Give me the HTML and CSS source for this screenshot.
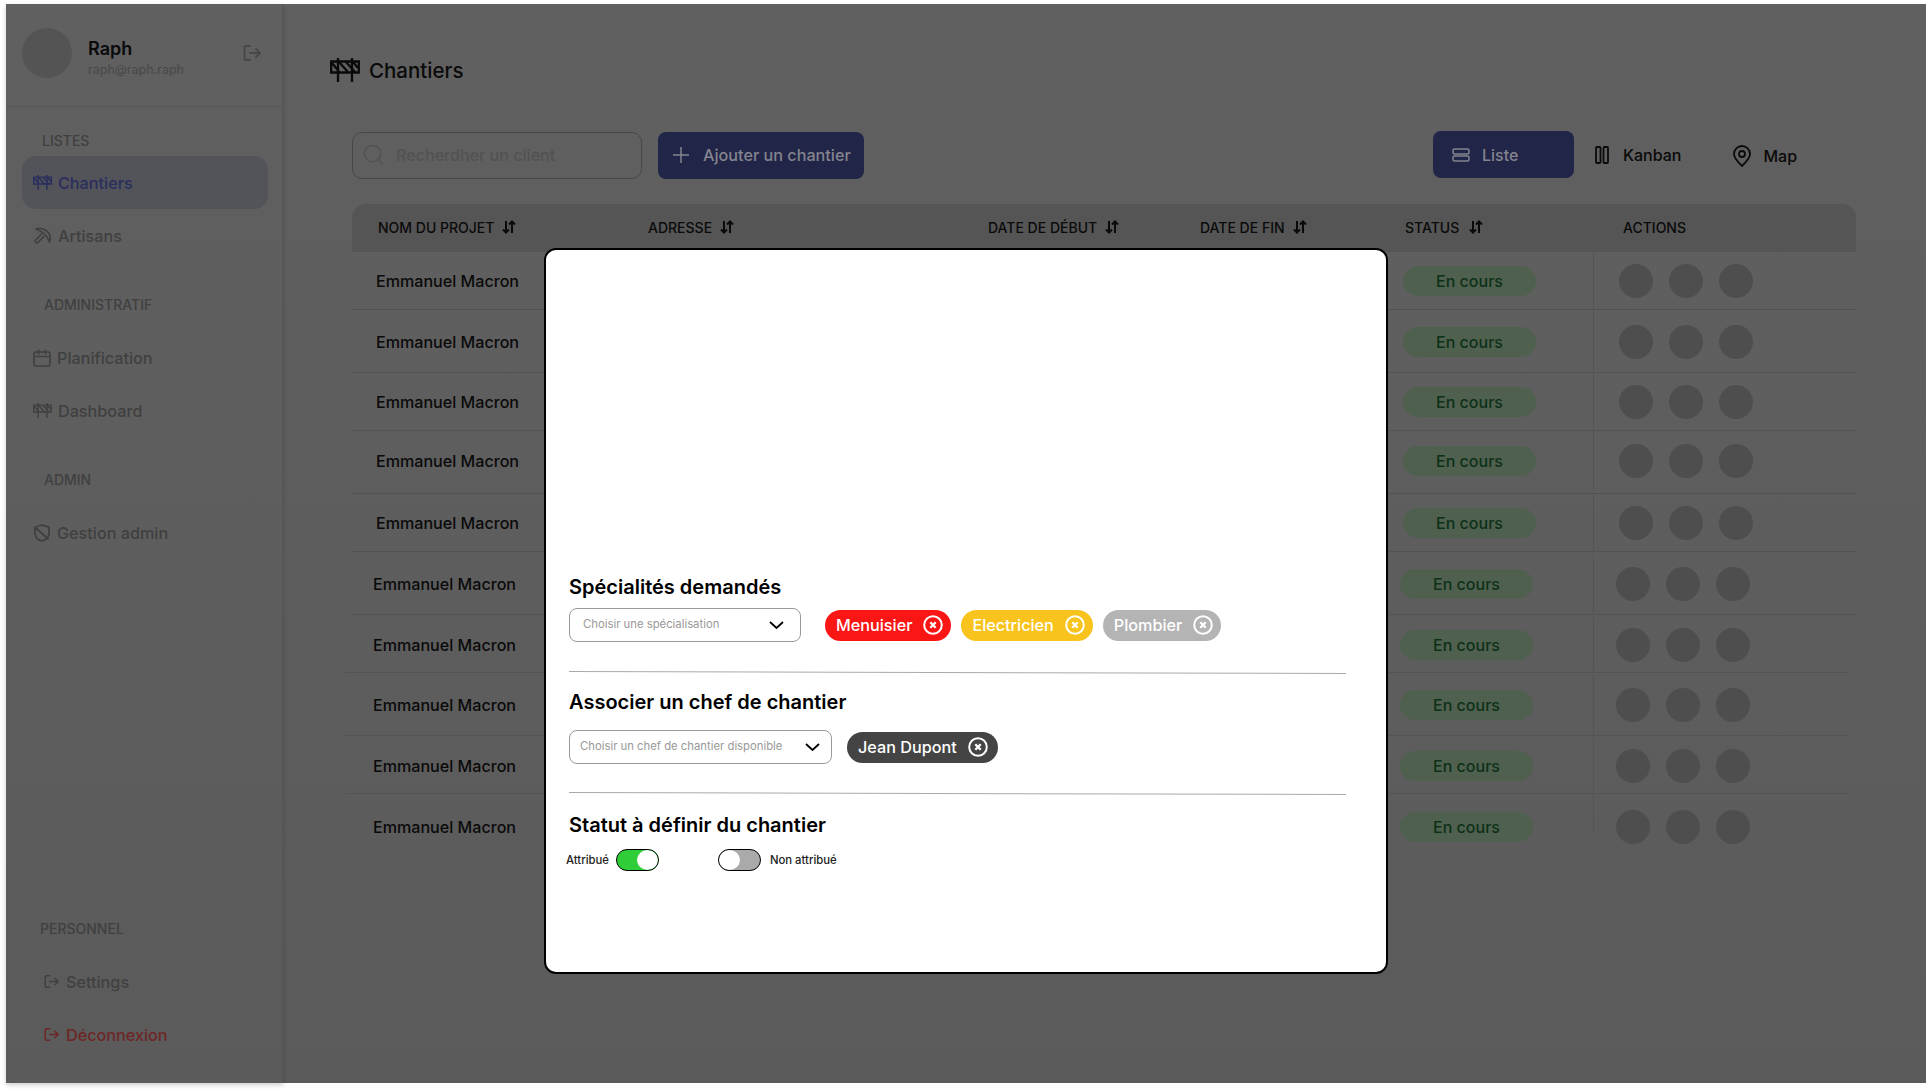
FILE: index.html
```html
<!DOCTYPE html>
<html lang="fr">
<head>
    <meta charset="UTF-8">
    <title>Chantiers</title>
    <link rel="stylesheet" href="styles.css">
</head>
<body>

<svg class="sprite" width="0" height="0">
    <symbol id="i-barrier" viewBox="0 0 30 26">
        <path d="M8 1v24M22 1v24M1.200 4.500h27.600v11H1.200z" fill="none" stroke="currentColor" stroke-width="2.300"/>
        <path d="M2 6l7 8.500M9 5l9 10M16 5l9 10M23 5l5 6" fill="none" stroke="currentColor" stroke-width="2.300"/>
    </symbol>
    <symbol id="i-logout" viewBox="0 0 18 18">
        <path d="M7 2H3a1.500 1.500 0 0 0-1.500 1.500v11A1.500 1.500 0 0 0 3 16h4M7 9h10M13 5l4 4-4 4" fill="none" stroke="currentColor" stroke-width="1.800" stroke-linecap="round" stroke-linejoin="round"/>
    </symbol>
    <symbol id="i-pick" viewBox="0 0 20 20">
        <path d="M3 3C8 1.500 14 3 17 8c1.500 3 1.500 6 .5 9-1.500-4-3.500-7-6.500-9.500C8.500 5.500 5.500 4 3 3z" fill="none" stroke="currentColor" stroke-width="1.700" stroke-linejoin="round"/>
        <path d="M9.500 8l-7 7a1.800 1.800 0 0 0 2.500 2.500l7-7" fill="none" stroke="currentColor" stroke-width="1.700" stroke-linejoin="round"/>
    </symbol>
    <symbol id="i-calendar" viewBox="0 0 18 18">
        <path d="M3 3h12a2 2 0 0 1 2 2v10a2 2 0 0 1-2 2H3a2 2 0 0 1-2-2V5a2 2 0 0 1 2-2zM1 7.500h16M5.500 1v4M12.500 1v4" fill="none" stroke="currentColor" stroke-width="1.700" stroke-linecap="round"/>
    </symbol>
    <symbol id="i-shield" viewBox="0 0 18 18">
        <path d="M4 2.500L9 1l7 2.200V9c0 4-3 7-7 8-4-1-7-4-7-8V3.500M2 3l13 12" fill="none" stroke="currentColor" stroke-width="1.800" stroke-linecap="round" stroke-linejoin="round"/>
    </symbol>
    <symbol id="i-sort" viewBox="0 0 14 14">
        <path d="M4 1v11.500M1 9.500l3 3 3-3M10 13V1.500M7 4.500l3-3 3 3" fill="none" stroke="currentColor" stroke-width="2"/>
    </symbol>
    <symbol id="i-close" viewBox="0 0 20 20">
        <circle cx="10" cy="10" r="8.800" fill="none" stroke="currentColor" stroke-width="2"/>
        <path d="M7.300 7.300l5.400 5.400M12.700 7.300l-5.400 5.400" fill="none" stroke="currentColor" stroke-width="2.300"/>
    </symbol>
    <symbol id="i-chevron" viewBox="0 0 15 8">
        <path d="M1 1l6.500 6L14 1" fill="none" stroke="currentColor" stroke-width="1.800"/>
    </symbol>
</svg>

<div class="app">

    <!-- Sidebar -->
    <aside class="sidebar">
        <div class="profile">
            <div class="avatar"></div>
            <div class="profile-text">
                <div class="profile-name">Raph</div>
                <div class="profile-mail">raph@raph.raph</div>
            </div>
            <svg class="profile-logout"><use href="#i-logout"/></svg>
        </div>

        <nav class="nav">
            <div class="nav-label nav-label-first">LISTES</div>
            <a class="nav-item active"><svg class="nav-icon wide"><use href="#i-barrier"/></svg>Chantiers</a>
            <a class="nav-item"><svg class="nav-icon wide"><use href="#i-pick"/></svg>Artisans</a>

            <div class="nav-label">ADMINISTRATIF</div>
            <a class="nav-item"><svg class="nav-icon"><use href="#i-calendar"/></svg>Planification</a>
            <a class="nav-item"><svg class="nav-icon wide"><use href="#i-barrier"/></svg>Dashboard</a>

            <div class="nav-label">ADMIN</div>
            <a class="nav-item"><svg class="nav-icon"><use href="#i-shield"/></svg>Gestion admin</a>

            <div class="nav-label nav-label-bottom">PERSONNEL</div>
            <a class="nav-item nav-item-small"><svg class="nav-icon small"><use href="#i-logout"/></svg>Settings</a>
            <a class="nav-item nav-item-small danger"><svg class="nav-icon small"><use href="#i-logout"/></svg>Déconnexion</a>
        </nav>
    </aside>

    <!-- Page -->
    <main class="page">
        <h1 class="page-title"><svg class="title-icon"><use href="#i-barrier"/></svg>Chantiers</h1>

        <div class="toolbar">
            <div class="search">
                <svg class="search-icon" viewBox="0 0 22 22"><circle cx="10" cy="10" r="8.500" fill="none" stroke="currentColor" stroke-width="1.500"/><path d="M16 16l5 5" stroke="currentColor" stroke-width="1.500"/></svg>
                Recherdher un client
            </div>
            <div class="btn-add">
                <svg class="plus-icon" viewBox="0 0 16 16"><path d="M8 0v16M0 8h16" stroke="currentColor" stroke-width="1.500"/></svg>
                Ajouter un chantier
            </div>
            <div class="views">
                <div class="view view-active">
                    <svg class="view-icon" viewBox="0 0 18 14"><rect x="1" y="1" width="16" height="5" rx="1.500" fill="none" stroke="currentColor" stroke-width="1.500"/><rect x="1" y="8" width="16" height="5" rx="1.500" fill="none" stroke="currentColor" stroke-width="1.500"/></svg>
                    Liste
                </div>
                <div class="view view-kanban">
                    <svg class="kanban-icon" viewBox="0 0 14 18"><rect x="1" y="1" width="4.500" height="16" rx="1" fill="none" stroke="currentColor" stroke-width="1.800"/><rect x="8.500" y="1" width="4.500" height="16" rx="1" fill="none" stroke="currentColor" stroke-width="1.800"/></svg>
                    Kanban
                </div>
                <div class="view view-map">
                    <svg class="map-icon" viewBox="0 0 18 22"><path d="M9 21C5 17 1 13.500 1 9a8 8 0 0 1 16 0c0 4.500-4 8-8 12z" fill="none" stroke="currentColor" stroke-width="1.800" stroke-linejoin="round"/><circle cx="9" cy="9" r="3" fill="none" stroke="currentColor" stroke-width="1.800"/></svg>
                    Map
                </div>
            </div>
        </div>

        <div class="table">
            <div class="table-head">
                <div class="th th-name">NOM DU PROJET <svg class="sort"><use href="#i-sort"/></svg></div>
                <div class="th th-address">ADRESSE <svg class="sort"><use href="#i-sort"/></svg></div>
                <div class="th th-start">DATE DE DÉBUT <svg class="sort"><use href="#i-sort"/></svg></div>
                <div class="th th-end">DATE DE FIN <svg class="sort"><use href="#i-sort"/></svg></div>
                <div class="th th-status">STATUS <svg class="sort"><use href="#i-sort"/></svg></div>
                <div class="th">ACTIONS</div>
            </div>
            <div class="row"><div class="cell-name">Emmanuel Macron</div><div class="cell-status"><span class="pill">En cours</span></div><div class="cell-actions"><i></i><i></i><i></i></div></div>
            <div class="row"><div class="cell-name">Emmanuel Macron</div><div class="cell-status"><span class="pill">En cours</span></div><div class="cell-actions"><i></i><i></i><i></i></div></div>
            <div class="row"><div class="cell-name">Emmanuel Macron</div><div class="cell-status"><span class="pill">En cours</span></div><div class="cell-actions"><i></i><i></i><i></i></div></div>
            <div class="row row-raised"><div class="cell-name">Emmanuel Macron</div><div class="cell-status"><span class="pill">En cours</span></div><div class="cell-actions"><i></i><i></i><i></i></div></div>
            <div class="row"><div class="cell-name">Emmanuel Macron</div><div class="cell-status"><span class="pill">En cours</span></div><div class="cell-actions"><i></i><i></i><i></i></div></div>
            <div class="row row-nudged"><div class="cell-name">Emmanuel Macron</div><div class="cell-status"><span class="pill">En cours</span></div><div class="cell-actions"><i></i><i></i><i></i></div></div>
            <div class="row row-nudged row-wide"><div class="cell-name">Emmanuel Macron</div><div class="cell-status"><span class="pill">En cours</span></div><div class="cell-actions"><i></i><i></i><i></i></div></div>
            <div class="row row-nudged row-wide"><div class="cell-name">Emmanuel Macron</div><div class="cell-status"><span class="pill">En cours</span></div><div class="cell-actions"><i></i><i></i><i></i></div></div>
            <div class="row row-nudged row-wide"><div class="cell-name">Emmanuel Macron</div><div class="cell-status"><span class="pill">En cours</span></div><div class="cell-actions"><i></i><i></i><i></i></div></div>
            <div class="row row-nudged row-wide row-last"><div class="cell-name">Emmanuel Macron</div><div class="cell-status"><span class="pill">En cours</span></div><div class="cell-actions"><i></i><i></i><i></i></div></div>
        </div>
    </main>

    <!-- Modal -->
    <div class="modal">
        <h2 class="modal-title">Spécialités demandés</h2>
        <div class="pick-row">
            <div class="select select-spec"><span>Choisir une spécialisation</span><svg class="chevron"><use href="#i-chevron"/></svg></div>
            <span class="tag tag-red">Menuisier<svg class="tag-close"><use href="#i-close"/></svg></span>
            <span class="tag tag-yellow">Electricien<svg class="tag-close"><use href="#i-close"/></svg></span>
            <span class="tag tag-grey">Plombier<svg class="tag-close"><use href="#i-close"/></svg></span>
        </div>
        <hr class="modal-line">

        <h2 class="modal-title">Associer un chef de chantier</h2>
        <div class="pick-row pick-row-chef">
            <div class="select select-chef"><span>Choisir un chef de chantier disponible</span><svg class="chevron"><use href="#i-chevron"/></svg></div>
            <span class="tag tag-dark">Jean Dupont<svg class="tag-close"><use href="#i-close"/></svg></span>
        </div>
        <hr class="modal-line">

        <h2 class="modal-title modal-title-last">Statut à définir du chantier</h2>
        <div class="toggles">
            <span class="toggle-text">Attribué</span>
            <span class="toggle toggle-on"></span>
            <span class="toggle toggle-off"></span>
            <span class="toggle-text">Non attribué</span>
        </div>
    </div>

</div>

</body>
</html>
```

FILE: styles.css
```css
* {
    margin: 0;
    padding: 0;
    box-sizing: border-box;
}

body {
    font-family: Inter, "Liberation Sans", sans-serif;
    background: #fff;
    height: 1092px;
    overflow: hidden;
}

.sprite {
    position: absolute;
}

.app {
    position: relative;
    display: flex;
    height: 1079px;
    margin: 4px 0 0 6px;
    background: linear-gradient(#606060, #5b5b5b);
    color: #0a0a0a;
}

/* Sidebar */

.sidebar {
    width: 277px;
    flex-shrink: 0;
    display: flex;
    flex-direction: column;
    border-right: 1px solid #575757;
    box-shadow: 0 2px 5px rgba(0, 0, 0, 0.2);
}

.profile {
    height: 103px;
    flex-shrink: 0;
    display: flex;
    align-items: center;
    padding: 0 21px 4px 16px;
    border-bottom: 1px solid #565656;
}

.avatar {
    width: 50px;
    height: 50px;
    border-radius: 50%;
    background: #545454;
}

.profile-text {
    margin-left: 16px;
    padding-top: 9px;
    flex: 1;
}

.profile-name {
    font-size: 18px;
    font-weight: 600;
    line-height: 22px;
}

.profile-mail {
    font-size: 12.500px;
    line-height: 16px;
    margin-top: 2px;
    color: #484848;
}

.profile-logout {
    width: 18px;
    height: 18px;
    color: #474747;
}

.nav {
    flex: 1;
    display: flex;
    flex-direction: column;
    padding: 0 14px 22px 16px;
}

.nav-label {
    font-size: 14px;
    font-weight: 500;
    line-height: 17px;
    color: #404040;
    padding-left: 22px;
    margin: 34px 0 18px;
}

.nav-label-first {
    padding-left: 20px;
    margin: 25px 0 7px;
}

.nav-label-bottom {
    padding-left: 18px;
    margin-top: auto;
}

.nav-item {
    height: 53px;
    flex-shrink: 0;
    display: flex;
    align-items: center;
    gap: 6px;
    padding-left: 11px;
    border-radius: 14px;
    font-size: 16.200px;
    font-weight: 550;
    color: #404040;
}

.nav-item.active {
    background: #52545a;
    color: #2a2e5c;
}

.nav-item-small {
    padding-left: 22px;
    gap: 7px;
}

.nav-item.danger {
    color: #6e2626;
}

.nav-icon {
    width: 18px;
    height: 18px;
}

.nav-icon.wide {
    width: 19px;
    height: 19px;
}

.nav-icon.small {
    width: 15px;
    height: 15px;
}

/* Page */

.page {
    flex: 1;
    min-width: 0;
}

.page-title {
    display: flex;
    align-items: center;
    gap: 9px;
    height: 26px;
    margin: 53px 0 0 47px;
    font-size: 20.500px;
    font-weight: 550;
}

.title-icon {
    width: 30px;
    height: 26px;
}

.toolbar {
    display: flex;
    align-items: flex-start;
    margin: 49px 0 0 69px;
}

.search {
    width: 290px;
    height: 47px;
    display: flex;
    align-items: center;
    gap: 12px;
    padding: 0 0 2px 10px;
    border: 1px solid #474747;
    border-radius: 10px;
    font-size: 16.100px;
    font-weight: 550;
    color: #525252;
}

.search-icon {
    width: 21px;
    height: 21px;
    color: #525252;
}

.btn-add {
    width: 206px;
    height: 47px;
    margin-left: 16px;
    display: flex;
    align-items: center;
    gap: 14px;
    padding: 0 0 2px 15px;
    background: #212548;
    border-radius: 8px;
    font-size: 16.200px;
    font-weight: 550;
    color: #83848e;
}

.plus-icon {
    width: 16px;
    height: 16px;
}

.views {
    display: flex;
    margin: -1px 0 0 569px;
}

.view {
    height: 47px;
    display: flex;
    align-items: center;
    font-size: 16px;
    font-weight: 550;
}

.view-active {
    width: 141px;
    gap: 12px;
    padding-left: 19px;
    background: #212548;
    border-radius: 8px;
    color: #83848e;
}

.view-icon {
    width: 18px;
    height: 14px;
}

.view-kanban {
    margin-left: 21px;
    gap: 14px;
}

.kanban-icon {
    width: 14px;
    height: 18px;
}

.view-map {
    margin: 1px 0 0 52px;
    gap: 12px;
}

.map-icon {
    width: 18px;
    height: 22px;
}

/* Table */

.table {
    width: 1504px;
    margin: 25px 0 0 69px;
}

.table-head {
    height: 48px;
    display: flex;
    align-items: center;
    padding: 0 0 2px 26px;
    background: #555;
    border-radius: 14px 14px 0 0;
}

.th {
    display: flex;
    align-items: center;
    gap: 8px;
    font-size: 14px;
    font-weight: 550;
    white-space: nowrap;
}

.th-name { width: 270px; }
.th-address { width: 340px; }
.th-start { width: 212px; }
.th-end { width: 205px; }
.th-status { width: 218px; gap: 10px; }

.sort {
    width: 14px;
    height: 14px;
}

.row {
    height: 58px;
    display: flex;
    align-items: stretch;
    padding: 1px 0 0 24px;
    border-bottom: 1px solid #535353;
}

.row:nth-child(odd) {
    height: 63px;
}

.cell-name {
    width: 1027px;
    display: flex;
    align-items: center;
    font-size: 16.100px;
    font-weight: 550;
}

.cell-status {
    width: 190px;
    display: flex;
    align-items: center;
}

.pill {
    width: 133px;
    height: 30px;
    display: flex;
    align-items: center;
    justify-content: center;
    border-radius: 15px;
    background: #50604f;
    font-size: 16px;
    font-weight: 550;
    color: #0c3018;
}

.cell-actions {
    flex: 1;
    display: flex;
    align-items: center;
    gap: 16px;
    padding-left: 25px;
    border-left: 1px solid #545454;
}

.cell-actions i {
    width: 34px;
    height: 34px;
    border-radius: 50%;
    background: #4e4e4e;
}

.row-raised {
    padding-top: 0;
    padding-bottom: 2px;
}

.row-nudged {
    padding-top: 2px;
    padding-left: 21px;
}

.row-nudged .cell-status {
    width: 193px;
}

.row-nudged .cell-actions {
    padding-left: 22px;
}

.row-wide {
    margin: 0 7px 0 -7px;
    padding-left: 28px;
}

.row.row-last {
    height: 65px;
    padding-top: 0;
    border-bottom: none;
}

/* the divider stops before the row does */
.row-last .cell-actions {
    border-left: none;
    padding-left: 23px;
    background: linear-gradient(#545454, #545454) left top / 1px 40px no-repeat;
}

/* Modal */

.modal {
    position: absolute;
    left: 538px;
    top: 244px;
    width: 844px;
    height: 726px;
    padding: 324px 40px 0 23px;
    background: #fff;
    border: 2px solid #000;
    border-radius: 12px;
}

.modal-title {
    font-size: 20px;
    font-weight: 600;
    line-height: 26px;
    color: #000;
}

.pick-row {
    display: flex;
    align-items: center;
    margin-top: 8px;
    gap: 10px;
}

.select {
    height: 34px;
    display: flex;
    align-items: center;
    justify-content: space-between;
    border: 1px solid #999;
    border-radius: 8px;
    font-size: 11.300px;
    color: #999;
}

.select span {
    padding-bottom: 2px;
}

.select-spec {
    width: 232px;
    padding: 0 16px 0 13px;
    margin-right: 14px;
}

.select-chef {
    width: 263px;
    padding: 0 11px 0 10px;
    margin-right: 5px;
}

.pick-row-chef {
    margin: 15px 0 -1px;
}

.chevron {
    width: 15px;
    height: 8px;
    color: #000;
    flex-shrink: 0;
}

.tag {
    height: 31px;
    display: flex;
    align-items: center;
    gap: 11px;
    padding: 0 8px 0 11px;
    border-radius: 16px;
    font-size: 16.200px;
    font-weight: 500;
    color: #fff;
}

.tag-red { background: #fb1616; }
.tag-yellow { background: #f7c31c; }
.tag-grey { background: #b4b4b4; }
.tag-dark { background: #444; padding-right: 10px; }

.tag-close {
    width: 20px;
    height: 20px;
}

.modal-line {
    border: none;
    border-top: 1px solid #aaa;
    margin: 30px 0 0;
    transform: rotate(.15deg);
}

.modal-line + .modal-title {
    margin-top: 16px;
}

.modal-line + .modal-title-last {
    margin-top: 18px;
}

.toggles {
    display: flex;
    align-items: center;
    margin: 11px 0 0 -3px;
    font-size: 11.300px;
    font-weight: 500;
    color: #222;
}

.toggle {
    position: relative;
    width: 43px;
    height: 22px;
    border: 1.500px solid #000;
    border-radius: 11px;
    overflow: hidden;
}

/* thumb */
.toggle::after {
    content: "";
    position: absolute;
    top: 0;
    bottom: 0;
    width: 21px;
    border-radius: 50%;
    background: #fff;
}

.toggle-on {
    margin-left: 7px;
    background: #2fce38;
}

.toggle-on::after {
    right: 0;
}

.toggle-off {
    margin: 0 9px 0 59px;
    background: #aaa;
}

.toggle-off::after {
    left: 0;
}
```
